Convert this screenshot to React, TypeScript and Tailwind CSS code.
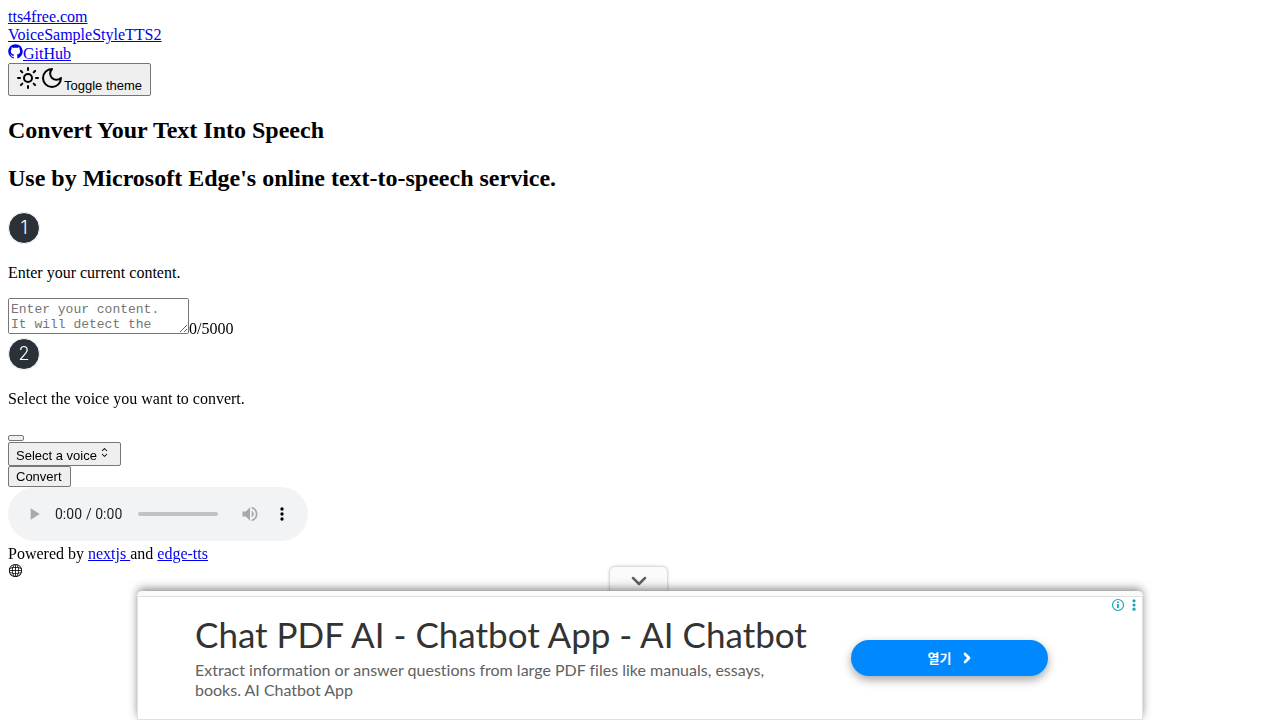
import { useState } from 'react'
import type { ReactNode } from 'react'
import { ChevronDown, ChevronRight, Sun } from 'lucide-react'
import { RxCaretSort, RxGithubLogo, RxGlobe } from 'react-icons/rx'

interface TextLinkProps {
  href: string
  children: ReactNode
}

function TextLink({ href, children }: TextLinkProps) {
  return (
    <a href={href} className="text-[#0000ee] underline">
      {children}
    </a>
  )
}

interface PlainButtonProps {
  children: ReactNode
  onClick?: () => void
}

function PlainButton({ children, onClick }: PlainButtonProps) {
  return (
    <button
      type="button"
      onClick={onClick}
      className="block rounded-[2px] border border-[#767676] bg-[#efefef] px-2 py-[2px] pl-[7px] font-['Liberation_Sans',Arial,sans-serif] text-[13px] leading-[15px]"
    >
      {children}
    </button>
  )
}

function StepBadge({ step }: { step: number }) {
  return (
    <div className="flex size-8 items-center justify-center rounded-full border border-white bg-[#2b3138] font-['Inter',sans-serif] text-lg font-light text-white">
      {step}
    </div>
  )
}

function MoonIcon() {
  return (
    <svg
      viewBox="0 0 24 24"
      fill="none"
      stroke="currentColor"
      strokeWidth="2"
      strokeLinecap="round"
      strokeLinejoin="round"
      className="inline size-6 align-baseline"
    >
      <path d="M12 3a6 6 0 0 0 9 9 9 9 0 1 1-9-9Z" />
    </svg>
  )
}

function Header() {
  return (
    <header>
      <div>
        <TextLink href="/">tts4free.com</TextLink>
      </div>
      <nav>
        <TextLink href="/voice-sample">VoiceSample</TextLink>
        <TextLink href="/styletts2">StyleTTS2</TextLink>
      </nav>
      <div>
        <TextLink href="#github">
          <RxGithubLogo className="inline size-[15px] align-baseline" />
          GitHub
        </TextLink>
      </div>
      <PlainButton>
        <Sun className="inline size-6 align-baseline" />
        <MoonIcon />
        Toggle theme
      </PlainButton>
    </header>
  )
}

function AdBanner() {
  const [open, setOpen] = useState(true)

  return (
    <aside className="fixed inset-x-0 bottom-0 mx-auto flex w-full max-w-[1006px] flex-col items-center">
      <button
        type="button"
        aria-label="Toggle ad"
        onClick={() => setOpen(!open)}
        className="mr-[3px] flex h-6 w-[57px] items-center justify-center rounded-t-[5px] bg-[#fafafa] pt-1 text-[#616161] shadow-[0_0_3px_1px_rgba(0,0,0,0.2)]"
      >
        <ChevronDown className="size-6" strokeWidth={2.5} />
      </button>
      {open && (
        <div className="relative w-full rounded-t-[5px] bg-[#fafafa] pt-[5px] shadow-[0_-3px_10px_-1px_rgba(0,0,0,0.5)]">
          <div className="flex h-31 items-center border border-[#e0e0e0] bg-white pl-[57px] font-['Lato',sans-serif] [font-variant-ligatures:none]">
            <div className="w-[620px]">
              <h3 className="text-[35px] leading-9 text-[#333333]">
                Chat PDF AI - Chatbot App - AI Chatbot
              </h3>
              <p className="mt-2 max-w-[600px] text-base leading-5 text-[#616161]">
                Extract information or answer questions from large PDF files like manuals, essays,
                books. AI Chatbot App
              </p>
            </div>
            <a
              href="#open"
              className="ml-9 flex h-9 w-[197px] items-center justify-center gap-2 rounded-full bg-[#0088ff] pl-1 font-['Noto_Sans_CJK_KR',sans-serif] text-[13px] font-bold text-white shadow-[0_4px_10px_rgba(0,0,0,0.35)]"
            >
              열기
              <ChevronRight className="size-4" strokeWidth={4} />
            </a>
          </div>
          <div className="absolute top-[7px] right-1 flex items-center gap-1 text-[#1aa6b7]">
            <svg viewBox="0 0 14 14" className="size-[14px]">
              <circle cx="7" cy="7" r="5.5" fill="none" stroke="currentColor" strokeWidth="1.2" />
              <path d="M6 6h1.8v4H6zM6 3.4h1.8v1.5H6z" fill="currentColor" />
            </svg>
            <svg viewBox="0 0 10 14" className="h-[14px] w-[10px]" fill="currentColor">
              <circle cx="5" cy="2.8" r="1.6" />
              <circle cx="5" cy="7" r="1.6" />
              <circle cx="5" cy="11.2" r="1.6" />
            </svg>
          </div>
        </div>
      )}
    </aside>
  )
}

export default function App() {
  const [content, setContent] = useState('')

  return (
    <div className="p-2 font-['Liberation_Serif','Times_New_Roman',serif] text-base leading-[18px] text-black">
      <Header />
      <main>
        <h2 className="my-5 text-2xl leading-7 font-bold">Convert Your Text Into Speech</h2>
        <h2 className="my-5 text-2xl leading-7 font-bold">
          Use by Microsoft Edge's online text-to-speech service.
        </h2>

        <StepBadge step={1} />
        <label htmlFor="content" className="mt-5 mb-4 block">
          Enter your current content.
        </label>
        <div className="mb-1 flex items-end">
          <textarea
            id="content"
            maxLength={5000}
            value={content}
            onChange={(e) => setContent(e.target.value)}
            placeholder="Enter your content. It will detect the language automatically."
            className="h-9 w-[181px] resize overflow-auto rounded-[2px] border border-[#767676] bg-white p-[2px] pt-[3px] pr-4 font-['Liberation_Mono',monospace] text-[13px] leading-[15px] placeholder:text-[#757575]"
          />
          <span className="-mb-1">{content.length}/5000</span>
        </div>

        <StepBadge step={2} />
        <p className="mt-5 mb-4">Select the voice you want to convert.</p>
        <div className="flex h-[18px] items-end pb-px">
          <button
            type="button"
            aria-label="Language"
            className="h-[6px] w-4 rounded-[2px] border border-[#767676] bg-[#efefef]"
          />
        </div>
        <PlainButton>
          Select a voice
          <RxCaretSort className="inline size-[15px] align-baseline" />
        </PlainButton>
        <PlainButton>Convert</PlainButton>
        <audio controls className="mb-1 h-[54px] w-[300px]" />
      </main>
      <footer>
        <div>
          Powered by <TextLink href="#nextjs">nextjs </TextLink>and{' '}
          <TextLink href="#edge-tts">edge-tts</TextLink>
        </div>
        <RxGlobe className="size-[15px]" />
      </footer>
      <AdBanner />
    </div>
  )
}
